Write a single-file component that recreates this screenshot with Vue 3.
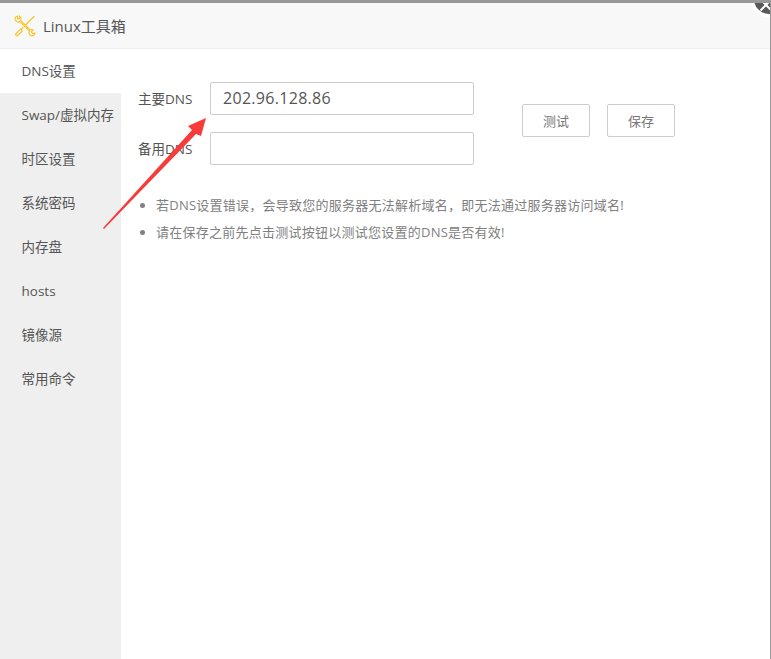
<script setup>
const navItems = ['DNS设置', 'Swap/虚拟内存', '时区设置', '系统密码', '内存盘', 'hosts', '镜像源', '常用命令']
const tips = [
  '若DNS设置错误，会导致您的服务器无法解析域名，即无法通过服务器访问域名!',
  '请在保存之前先点击测试按钮以测试您设置的DNS是否有效!'
]
</script>

<template>
  <div class="window">
    <header class="title">
      <svg class="logo" width="22" height="22" viewBox="0 0 22 22" fill="none" stroke="#fbc52d" stroke-width="1.1">
        <path d="M20.5 1 L11 10.5 M9.5 12 L7.5 14 M8.5 16 L6.5 14 L1.2 19.3 L3 21 L8.5 16" />
        <path d="M3.5 1 A3.4 3.4 0 0 0 1.2 5.2 A3.4 3.4 0 0 0 5.6 6.4 L15.4 16 A3.4 3.4 0 0 0 17 20.8 A3.4 3.4 0 0 0 20.9 18 L18.6 18.6 L17.4 16.8 L19.2 15 A3.4 3.4 0 0 0 16.2 15 L6.6 5.4 A3.4 3.4 0 0 0 5.6 1.2 L5.6 3.4 L3.6 4 Z" />
      </svg>
      <span>Linux工具箱</span>
    </header>
    <div class="body">
      <nav class="nav">
        <div v-for="(item, i) in navItems" :key="item" class="nav-item" :class="{ active: i === 0 }">{{ item }}</div>
      </nav>
      <main class="main">
        <div class="form-row">
          <div class="fields">
            <label class="field">
              <span class="field-label">主要DNS</span>
              <span class="input">202.96.128.86</span>
            </label>
            <label class="field">
              <span class="field-label">备用DNS</span>
              <span class="input"></span>
            </label>
          </div>
          <div class="buttons">
            <button class="btn">测试</button>
            <button class="btn">保存</button>
          </div>
        </div>
        <ul class="tips">
          <li v-for="tip in tips" :key="tip">{{ tip }}</li>
        </ul>
      </main>
    </div>
    <div class="close">
      <svg width="16" height="16" viewBox="0 0 16 16"><path d="M2.5 2.5 L13.5 13.5 M13.5 2.5 L2.5 13.5" stroke="#fff" stroke-width="2" /></svg>
    </div>
    <svg class="arrow" width="110" height="120" viewBox="0 0 110 120">
      <path d="M0 115 L89 17 L85 13 L103 5 L98 23 L93 21 L1 116 Z" fill="#f73a3a" />
    </svg>
  </div>
</template>

<style scoped>
.window {
  position: relative;
  width: 771px;
  height: 659px;
  box-sizing: border-box;
  border-top: 3px solid #999;
  border-right: 1px solid #999;
  background: #fff;
  overflow: hidden;
  font-family: "Open Sans", "Noto Sans CJK SC", sans-serif;
  color: #555;
}
.title {
  height: 46px;
  box-sizing: border-box;
  display: flex;
  align-items: center;
  gap: 7px;
  padding-left: 14px;
  background: #f8f8f8;
  border-bottom: 1px solid #eee;
  font-size: 15px;
  color: #555;
}
.body {
  display: flex;
  height: 610px;
}
.nav {
  width: 121px;
  background: #efefef;
  flex: none;
}
.nav-item {
  height: 44px;
  line-height: 44px;
  padding-left: 21.5px;
  font-size: 13.5px;
  color: #555;
  white-space: nowrap;
}
.nav-item.active {
  background: #fff;
}
.main {
  flex: 1;
  padding: 33px 0 0 17px;
}
.form-row {
  display: flex;
  align-items: center;
}
.fields {
  display: flex;
  flex-direction: column;
  gap: 17px;
}
.field {
  display: flex;
  align-items: center;
  font-size: 13.5px;
}
.field-label {
  width: 72px;
  flex: none;
  padding-bottom: 2px;
}
.input {
  width: 264px;
  height: 33px;
  box-sizing: border-box;
  border: 1px solid #ccc;
  border-radius: 2px;
  padding-left: 12px;
  line-height: 31px;
  font-size: 16px;
  letter-spacing: 0.3px;
  color: #555;
}
.buttons {
  display: flex;
  gap: 17px;
  margin-left: 48px;
  margin-bottom: 6px;
}
.btn {
  width: 68px;
  height: 33px;
  box-sizing: border-box;
  background: #fff;
  border: 1px solid #ccc;
  border-radius: 2px;
  font: inherit;
  font-size: 13px;
  color: #777;
  padding: 0;
}
.tips {
  margin: 27px 0 0;
  padding: 0 0 0 18px;
  font-size: 13px;
  letter-spacing: 0.25px;
  line-height: 27px;
  color: #808080;
}
.close {
  position: absolute;
  left: 751px;
  top: -22px;
  width: 36px;
  height: 36px;
  box-sizing: border-box;
  border-radius: 50%;
  background: #595959;
  border: 3px solid #fff;
}
.close svg {
  position: absolute;
  left: 4px;
  top: 13px;
}
.arrow {
  position: absolute;
  left: 103px;
  top: 110px;
  pointer-events: none;
}
</style>
